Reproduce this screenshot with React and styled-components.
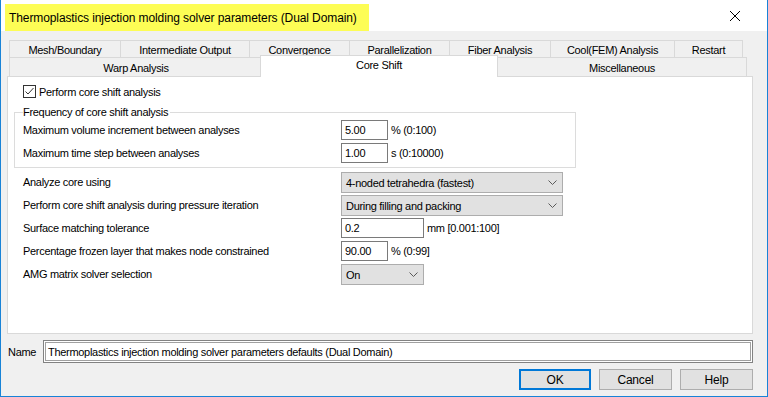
import React from 'react';
import styled, { createGlobalStyle } from 'styled-components';

const GlobalStyle = createGlobalStyle`
  html, body {
    margin: 0;
    padding: 0;
    background: #ffffff;
  }
  body {
    font-family: "Liberation Sans", Arial, sans-serif;
    font-size: 11px;
    letter-spacing: -0.3px;
    color: #000;
  }
`;

const Window = styled.div`
  width: 768px;
  height: 397px;
  box-sizing: border-box;
  border: 1px solid #1883d7;
  border-top: none;
  background: #f0f0f0;
  display: flex;
  flex-direction: column;
  overflow: hidden;
`;

const TitleBar = styled.div`
  height: 31px;
  flex-shrink: 0;
  background: #ffffff;
  display: flex;
  align-items: flex-end;
`;

const TitleText = styled.div`
  margin-left: 4px;
  height: 27px;
  padding: 0 12px 0 4px;
  background: #fdfd55;
  display: flex;
  align-items: center;
  font-size: 12px;
  letter-spacing: -0.1px;
  color: #000;
`;

const CloseButton = styled.div`
  margin-left: auto;
  margin-right: 26px;
  align-self: flex-start;
  margin-top: 10px;
  width: 12px;
  height: 12px;
  display: flex;
`;

const Body = styled.div`
  flex: 1;
  padding: 9px 14px 0 6px;
  display: flex;
  flex-direction: column;
`;

const TabStrip = styled.div`
  padding: 0 3px 0 2px;
  display: flex;
  flex-direction: column;
`;

const TabRow = styled.div`
  display: flex;
  height: ${p => p.$h}px;
`;

const Tab = styled.div`
  box-sizing: border-box;
  width: ${p => p.$w}px;
  border: 1px solid #d9d9d9;
  border-bottom: none;
  margin-right: -1px;
  background: #f0f0f0;
  display: flex;
  align-items: center;
  justify-content: center;
  white-space: nowrap;
  padding-top: 1px;
`;

const ActiveTab = styled(Tab)`
  position: relative;
  z-index: 1;
  background: #ffffff;
  margin: -2px -1px -1px -2px;
  height: calc(100% + 3px);
  width: ${p => p.$w + 2}px;
  align-items: flex-start;
  padding-top: 3px;
`;

const Panel = styled.div`
  height: 258px;
  box-sizing: border-box;
  border: 1px solid #d9d9d9;
  background: #ffffff;
  padding: 7px 0 0 6px;
  display: flex;
  flex-direction: column;
`;

const CheckRow = styled.label`
  display: flex;
  align-items: center;
  gap: 3px;
  margin-left: 9px;
  height: 13px;
  padding-top: 1px;
`;

const CheckBox = styled.span`
  width: 13px;
  height: 13px;
  box-sizing: border-box;
  border: 1px solid #333333;
  background: #fff;
  display: flex;
  align-items: center;
  justify-content: center;
`;

const Group = styled.fieldset`
  margin: 8px 0 0 0;
  width: 562px;
  box-sizing: border-box;
  border: 1px solid #dcdcdc;
  padding: 1px 0 1px 8px;
  min-width: 0;
`;

const Legend = styled.legend`
  padding: 0 2px 0 0;
  margin-left: 0;
  line-height: 13px;
`;

const FormGrid = styled.div`
  display: grid;
  grid-template-columns: 318px auto;
  grid-auto-rows: 23px;
  margin-left: ${p => p.$indent || 0}px;
  margin-top: ${p => p.$top || 0}px;
`;

const Label = styled.div`
  display: flex;
  align-items: center;
  height: 20px;
  white-space: nowrap;
`;

const Field = styled.div`
  display: flex;
  align-items: flex-start;
  gap: 3px;
`;

const TextBox = styled.div`
  box-sizing: border-box;
  width: ${p => p.$w}px;
  height: 20px;
  border: 1px solid #7a7a7a;
  background: #fff;
  padding-left: 3px;
  display: flex;
  align-items: center;
`;

const Unit = styled.span`
  height: 20px;
  display: flex;
  align-items: center;
  white-space: nowrap;
`;

const Combo = styled.div`
  box-sizing: border-box;
  width: ${p => p.$w}px;
  height: 21px;
  border: 1px solid #adadad;
  background: #e1e1e1;
  padding: 0 5px 0 4px;
  display: flex;
  align-items: center;
  justify-content: space-between;
`;

const NameRow = styled.div`
  display: flex;
  align-items: center;
  margin-top: 6px;
  height: 23px;
`;

const NameLabel = styled.span`
  width: 35px;
  padding-left: 1px;
`;

const NameInput = styled.div`
  flex: 1;
  height: 23px;
  box-sizing: border-box;
  border: 1px solid #828282;
  box-shadow: inset 0 0 0 1px #ffffff, inset 0 0 0 2px #a0a0a0;
  background: #fff;
  padding-left: 4px;
  display: flex;
  align-items: center;
`;

const ButtonRow = styled.div`
  display: flex;
  justify-content: flex-end;
  gap: 8px;
  margin-top: 6px;
`;

const Button = styled.div`
  box-sizing: border-box;
  width: ${p => p.$w}px;
  height: 21px;
  border: ${p => (p.$default ? '2px solid #0078d7' : '1px solid #adadad')};
  background: #e1e1e1;
  display: flex;
  align-items: center;
  justify-content: center;
  font-size: 12px;
  letter-spacing: -0.2px;
`;

const Chevron = () => (
  <svg width="9" height="5" viewBox="0 0 9 5">
    <polyline points="0.5,0.5 4.5,4.5 8.5,0.5" fill="none" stroke="#5a5a5a" strokeWidth="1" />
  </svg>
);

const CheckMark = () => (
  <svg width="11" height="11" viewBox="0 0 11 11">
    <polyline points="1.5,5.5 4,8 9.5,2" fill="none" stroke="#333" strokeWidth="1" />
  </svg>
);

const row1 = [
  ['Mesh/Boundary', 112],
  ['Intermediate Output', 130],
  ['Convergence', 101],
  ['Parallelization', 101],
  ['Fiber Analysis', 102],
  ['Cool(FEM) Analysis', 125],
  ['Restart', 69],
];

const row2 = [
  ['Warp Analysis', 254],
  ['Core Shift', 236, true],
  ['Miscellaneous', 250],
];

export default function App() {
  return (
    <>
      <GlobalStyle />
      <Window>
        <TitleBar>
          <TitleText>Thermoplastics injection molding solver parameters (Dual Domain)</TitleText>
          <CloseButton>
            <svg width="12" height="12" viewBox="0 0 12 12">
              <path d="M1 1 L11 11 M11 1 L1 11" stroke="#000" strokeWidth="1" />
            </svg>
          </CloseButton>
        </TitleBar>
        <Body>
          <TabStrip>
            <TabRow $h={17}>
              {row1.map(([t, w]) => <Tab key={t} $w={w}>{t}</Tab>)}
            </TabRow>
            <TabRow $h={19}>
              {row2.map(([t, w, active]) =>
                active ? <ActiveTab key={t} $w={w}>{t}</ActiveTab> : <Tab key={t} $w={w}>{t}</Tab>
              )}
            </TabRow>
          </TabStrip>
          <Panel>
            <CheckRow>
              <CheckBox><CheckMark /></CheckBox>
              Perform core shift analysis
            </CheckRow>
            <Group>
              <Legend>Frequency of core shift analysis</Legend>
              <FormGrid>
                <Label>Maximum volume increment between analyses</Label>
                <Field><TextBox $w={47}>5.00</TextBox><Unit>% (0:100)</Unit></Field>
                <Label>Maximum time step between analyses</Label>
                <Field><TextBox $w={47}>1.00</TextBox><Unit>s (0:10000)</Unit></Field>
              </FormGrid>
            </Group>
            <FormGrid $indent={9} $top={4}>
              <Label>Analyze core using</Label>
              <Field><Combo $w={222}>4-noded tetrahedra (fastest)<Chevron /></Combo></Field>
              <Label>Perform core shift analysis during pressure iteration</Label>
              <Field><Combo $w={222}>During filling and packing<Chevron /></Combo></Field>
              <Label>Surface matching tolerance</Label>
              <Field><TextBox $w={83}>0.2</TextBox><Unit>mm [0.001:100]</Unit></Field>
              <Label>Percentage frozen layer that makes node constrained</Label>
              <Field><TextBox $w={47}>90.00</TextBox><Unit>% (0:99]</Unit></Field>
              <Label>AMG matrix solver selection</Label>
              <Field><Combo $w={83}>On<Chevron /></Combo></Field>
            </FormGrid>
          </Panel>
          <NameRow>
            <NameLabel>Name</NameLabel>
            <NameInput>Thermoplastics injection molding solver parameters defaults (Dual Domain)</NameInput>
          </NameRow>
          <ButtonRow>
            <Button $w={72} $default>OK</Button>
            <Button $w={73}>Cancel</Button>
            <Button $w={73}>Help</Button>
          </ButtonRow>
        </Body>
      </Window>
    </>
  );
}
